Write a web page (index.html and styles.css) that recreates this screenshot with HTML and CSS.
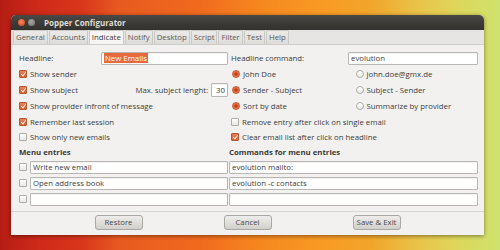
FILE: index.html
```html
<!DOCTYPE html>
<html>
<head>
<meta charset="utf-8">
<link rel="stylesheet" href="styles.css">
</head>
<body>
<div class="desk">
  <div class="win">
    <div class="titlebar">
      <span class="dot close"></span><span class="dot min"></span>
      <span class="title">Popper Configurator</span>
    </div>
    <div class="tabs">
      <span class="tab">General</span><span class="tab">Accounts</span><span class="tab active">Indicate</span><span class="tab">Notify</span><span class="tab">Desktop</span><span class="tab">Script</span><span class="tab">Filter</span><span class="tab">Test</span><span class="tab">Help</span>
    </div>
    <div class="content">
      <div class="grid">
        <div class="cell row">
          <span class="lbl w82">Headline:</span>
          <span class="input grow"><span class="sel">New Emails</span></span>
        </div>
        <div class="cell row">
          <span class="lbl w117">Headline command:</span>
          <span class="input grow">evolution</span>
        </div>

        <div class="cell row"><span class="cb on"></span>Show sender</div>
        <div class="cell row split">
          <span class="row half"><span class="rb on"></span>John Doe</span>
          <span class="row half"><span class="rb"></span>john.doe@gmx.de</span>
        </div>

        <div class="cell row"><span class="cb on"></span>Show subject<span class="push">Max. subject lenght:</span><span class="input spin">30</span></div>
        <div class="cell row split">
          <span class="row half"><span class="rb on"></span>Sender - Subject</span>
          <span class="row half"><span class="rb"></span>Subject - Sender</span>
        </div>

        <div class="cell row"><span class="cb on"></span>Show provider infront of message</div>
        <div class="cell row split">
          <span class="row half"><span class="rb on"></span>Sort by date</span>
          <span class="row half"><span class="rb"></span>Summarize by provider</span>
        </div>

        <div class="cell row"><span class="cb on"></span>Remember last session</div>
        <div class="cell row"><span class="cb"></span>Remove entry after click on single email</div>

        <div class="cell row"><span class="cb"></span>Show only new emails</div>
        <div class="cell row"><span class="cb on"></span>Clear email list after click on headline</div>

        <div class="cell row head">Menu entries</div>
        <div class="cell row head r">Commands for menu entries</div>

        <div class="cell row"><span class="cb"></span><span class="input grow">Write new email</span></div>
        <div class="cell row r"><span class="input grow">evolution mailto:</span></div>

        <div class="cell row"><span class="cb"></span><span class="input grow">Open address book</span></div>
        <div class="cell row r"><span class="input grow">evolution -c contacts</span></div>

        <div class="cell row"><span class="cb"></span><span class="input grow"></span></div>
        <div class="cell row r"><span class="input grow"></span></div>
      </div>
    </div>
    <div class="buttons">
      <span class="btn">Restore</span>
      <span class="btn">Cancel</span>
      <span class="btn">Save &amp; Exit</span>
    </div>
  </div>
</div>
</body>
</html>
```

FILE: styles.css
```css
* { box-sizing: border-box; }
html, body { margin: 0; padding: 0; }
body {
  width: 500px; height: 250px; overflow: hidden;
  font-family: "Open Sans", "DejaVu Sans", sans-serif;
  font-size: 7.8px;
  color: #3c3c3c;
}
.desk {
  width: 500px; height: 250px;
  padding: 15px 0 0 11px;
  background:
    linear-gradient(90deg,
      #b51d14 0px, #cf2a1a 40px, #d8351c 80px, #e85a20 120px,
      #f06a1e 200px, #f5871f 260px, #f89a24 320px, #f1a52a 370px,
      #e9c44a 420px, #dcd85c 460px, #cfe26e 500px);
}
.win {
  width: 473px; height: 220px;
  background: #f2f1f0;
  border-radius: 5px 5px 0 0;
  box-shadow: 0 1px 4px rgba(0,0,0,0.45);
  display: flex; flex-direction: column;
  overflow: hidden;
}
.titlebar {
  height: 15px; flex: none;
  background: linear-gradient(#4a4945, #3a3935 60%, #33322e);
  display: flex; align-items: center;
  padding-left: 7px;
}
.dot {
  width: 7px; height: 7px; border-radius: 50%;
  margin-right: 3px;
}
.close { background: radial-gradient(circle at 45% 40%, #f58a60, #e0502a 70%, #b8401f); }
.min { background: radial-gradient(circle at 45% 40%, #a8a7a2, #7d7c78 75%); }
.title {
  color: #dfdbd2; font-weight: bold; font-size: 8px;
  margin-left: 6px;
}
.tabs {
  height: 15px; flex: none;
  display: flex; align-items: flex-end;
  padding: 1px 0 0 2px;
  background: #e6e5e3;
  border-bottom: 1px solid #cfcdc9;
  gap: 1px;
}
.tab {
  height: 14px;
  padding: 0 2px;
  line-height: 13px;
  border: 1px solid #cbc9c5;
  border-bottom: none;
  border-radius: 2px 2px 0 0;
  background: linear-gradient(#ebeae8, #dedcd9);
  color: #5a5a5a;
  font-size: 7.8px;
}
.tab.active {
  background: #f6f5f4;
  color: #3a3a3a;
}
.content {
  flex: none;
  padding: 5px 6px 0 8px;
}
.grid {
  display: grid;
  grid-template-columns: 209px 1fr;
  grid-template-rows: 16px 16px 16px 16px 15px 16px 14px 16px 16px 16px;
  column-gap: 3px;
}
.row { display: flex; align-items: center; white-space: nowrap; }
.cell { min-width: 0; }
.cell.r { margin-left: -2px; }
.lbl { flex: none; }
.w82 { width: 82px; }
.w117 { width: 117px; }
.grow { flex: 1; }
.push { margin-left: auto; margin-right: 3px; }
.half { width: 124px; }
.head { font-weight: bold; }
.input {
  height: 13px;
  background: #fff;
  border: 1px solid #b9b7b3;
  border-radius: 1px;
  padding: 0 2px;
  line-height: 11px;
  color: #3c3c3c;
  box-shadow: inset 0 1px 1px rgba(0,0,0,0.06);
}
.spin { width: 17px; text-align: right; padding: 0 2px; height: 14px; line-height: 12px; }
.sel { background: #e8693b; color: #fff; padding: 0 1px; }
.cb {
  flex: none;
  width: 8px; height: 8px;
  border: 1px solid #aeaca7;
  border-radius: 1px;
  background: linear-gradient(#fdfdfc, #e9e8e6);
  margin: 0 3px 0 0;
  position: relative;
}
.cb.on {
  background: linear-gradient(#ec8055, #d85f33);
  border-color: #b9542e;
}
.cb.on::after {
  content: "";
  position: absolute;
  left: 2px; top: 0px;
  width: 2px; height: 4px;
  border: solid #fbe9df;
  border-width: 0 1.3px 1.3px 0;
  transform: rotate(40deg);
}
.rb {
  flex: none;
  width: 8px; height: 8px;
  border-radius: 50%;
  border: 1px solid #aeaca7;
  background: linear-gradient(#fdfdfc, #eae9e7);
  margin: 0 3px 0 1px;
}
.rb.on {
  border-color: #c7552c;
  background: radial-gradient(circle, #b9431f 0, #b9431f 1.3px, #ea7248 2px, #e26338 100%);
}
.buttons {
  margin-top: auto;
  height: 24px;
  border-top: 1px solid #d7d5d1;
  display: flex; justify-content: center; align-items: center;
  gap: 81px;
  padding-bottom: 2px;
}
.btn {
  width: 48px; height: 15px;
  border: 1px solid #aaa8a3;
  border-radius: 3px;
  background: linear-gradient(#eeedeb, #d2d0cc);
  text-align: center;
  line-height: 13px;
  color: #4a4a4a;
  font-size: 7.8px;
}
```
